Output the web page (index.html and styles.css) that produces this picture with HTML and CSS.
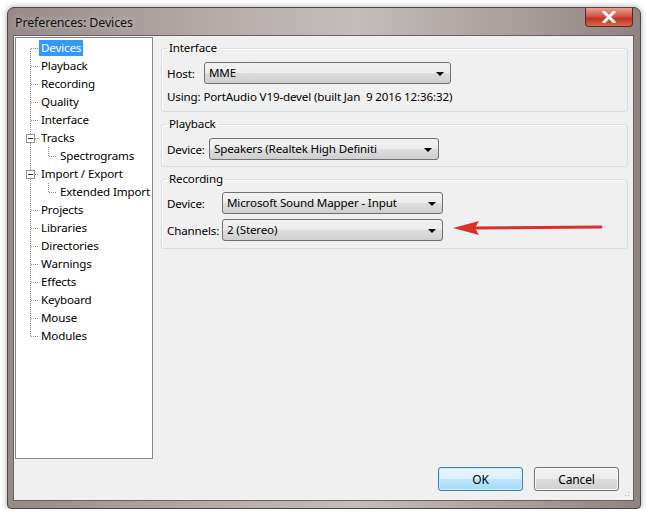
FILE: index.html
```html
<!DOCTYPE html>
<html lang="en">
<head>
    <meta charset="UTF-8">
    <title>Preferences: Devices</title>
    <link rel="stylesheet" href="styles.css">
</head>
<body>
    <div class="window">
        <div class="titlebar">
            <span class="title">Preferences: Devices</span>
            <div class="close">
                <svg width="14" height="12" viewBox="0 0 14 12">
                    <path d="M2 1 L12 11 M12 1 L2 11" stroke="#fff" stroke-width="3" stroke-linecap="square"/>
                </svg>
            </div>
        </div>

        <div class="client">
            <div class="main">
                <div class="tree">
                    <div class="tree-list">
                        <div class="node"><span class="label selected">Devices</span></div>
                        <div class="node"><span class="label">Playback</span></div>
                        <div class="node"><span class="label">Recording</span></div>
                        <div class="node"><span class="label">Quality</span></div>
                        <div class="node"><span class="label">Interface</span></div>
                        <div class="node"><span class="expander"></span><span class="label">Tracks</span></div>
                        <div class="node child"><span class="label">Spectrograms</span></div>
                        <div class="node"><span class="expander"></span><span class="label">Import / Export</span></div>
                        <div class="node child"><span class="label">Extended Import</span></div>
                        <div class="node"><span class="label">Projects</span></div>
                        <div class="node"><span class="label">Libraries</span></div>
                        <div class="node"><span class="label">Directories</span></div>
                        <div class="node"><span class="label">Warnings</span></div>
                        <div class="node"><span class="label">Effects</span></div>
                        <div class="node"><span class="label">Keyboard</span></div>
                        <div class="node"><span class="label">Mouse</span></div>
                        <div class="node"><span class="label">Modules</span></div>
                    </div>
                </div>

                <div class="pane">
                    <fieldset class="group">
                        <legend>Interface</legend>
                        <div class="row">
                            <span class="field-label">Host:</span>
                            <div class="combo combo-host">MME</div>
                        </div>
                        <div class="using">Using: PortAudio V19-devel (built Jan&nbsp; 9 2016 12:36:32)</div>
                    </fieldset>

                    <fieldset class="group">
                        <legend>Playback</legend>
                        <div class="row">
                            <span class="field-label">Device:</span>
                            <div class="combo combo-play">Speakers (Realtek High Definiti</div>
                        </div>
                    </fieldset>

                    <fieldset class="group recording">
                        <legend>Recording</legend>
                        <div class="row">
                            <span class="field-label wide">Device:</span>
                            <div class="combo combo-rec">Microsoft Sound Mapper - Input</div>
                        </div>
                        <div class="row">
                            <span class="field-label wide">Channels:</span>
                            <div class="combo combo-rec">2 (Stereo)</div>
                        </div>
                        <svg class="arrow" width="156" height="20" viewBox="0 0 156 20">
                            <path d="M22 10 L150 9" stroke="#d9302a" stroke-width="3" stroke-linecap="round"/>
                            <path d="M2 10 L28 3 L24 10 L28 17 Z" fill="#d9302a"/>
                        </svg>
                    </fieldset>
                </div>
            </div>

            <div class="buttons">
                <button class="btn default">OK</button>
                <button class="btn">Cancel</button>
            </div>
            <div class="grip"></div>
        </div>
    </div>
</body>
</html>
```

FILE: styles.css
```css
body {
    margin: 0;
    background: #ffffff;
    font-family: "Noto Sans", "Open Sans", sans-serif;
    font-size: 11.6px;
    letter-spacing: -0.15px;
    color: #000;
}
.window {
    margin: 7px 0 0 7px;
    width: 634px;
    height: 502px;
    box-sizing: border-box;
    border: 1px solid #4e4545;
    border-radius: 7px 7px 4px 4px;
    background: linear-gradient(90deg, #968a88 0%, #b7aeac 35%, #c4bdbb 55%, #a99f9d 80%, #8f8382 100%);
    box-shadow: 0 0 6px rgba(0,0,0,0.35);
    display: flex;
    flex-direction: column;
    position: relative;
}
.titlebar {
    height: 27px;
    display: flex;
    align-items: flex-start;
    justify-content: space-between;
}
.title {
    padding: 6px 0 0 7px;
    font-size: 12.5px;
    color: #111;
    text-shadow: 0 0 6px rgba(255,255,255,0.6);
}
.close {
    width: 46px;
    height: 18px;
    margin: 0 7px 0 0;
    border: 1px solid #5c2a24;
    border-top: none;
    border-radius: 0 0 4px 4px;
    background: linear-gradient(180deg, #e8a092 0%, #d0584a 45%, #c2301f 60%, #d86a50 100%);
    display: flex;
    align-items: center;
    justify-content: center;
}
.client {
    flex: 1;
    margin: 0 6px 7px 5px;
    background: #f0f0f0;
    border: 1px solid #6a6060;
    display: flex;
    flex-direction: column;
    position: relative;
}
.main {
    display: flex;
    gap: 8px;
    padding: 1px 0 0 1px;
}
.tree {
    width: 138px;
    height: 422px;
    box-sizing: border-box;
    background: #fff;
    border: 1px solid #828790;
    padding-top: 1px;
}
.tree-list {
    position: relative;
}
.tree-list::before {
    content: "";
    position: absolute;
    left: 14px;
    top: 10px;
    bottom: 9px;
    border-left: 1px dotted #8a8a8a;
}
.node {
    height: 18px;
    line-height: 17px;
    padding-left: 23px;
    position: relative;
    white-space: nowrap;
}
.node::before {
    content: "";
    position: absolute;
    left: 15px;
    top: 9px;
    width: 7px;
    border-top: 1px dotted #8a8a8a;
}
.node.child {
    padding-left: 42px;
}
.node.child::before {
    left: 33px;
}
.node.child::after {
    content: "";
    position: absolute;
    left: 32px;
    top: 0;
    height: 9px;
    border-left: 1px dotted #8a8a8a;
}
.label {
    padding: 0 2px 1px;
}
.label.selected {
    background: #3399ff;
    color: #fff;
}
.expander {
    position: absolute;
    left: 10px;
    top: 5px;
    width: 7px;
    height: 7px;
    border: 1px solid #919191;
    background: #fff;
    z-index: 1;
}
.expander::after {
    content: "";
    position: absolute;
    left: 1px;
    top: 3px;
    width: 5px;
    border-top: 1px solid #333;
}
.pane {
    width: 467px;
    padding-top: 3px;
    display: flex;
    flex-direction: column;
    gap: 4px;
}
.group {
    margin: 0;
    padding: 0 5px 6px 5px;
    border: 1px solid #d5dfe5;
    border-radius: 3px;
    box-shadow: inset 1px 1px 0 #fff;
    position: relative;
}
.group legend {
    padding: 0 2px;
    line-height: 16px;
}
.row {
    display: flex;
    align-items: center;
    margin-top: 6px;
}
.recording {
    padding-bottom: 7px;
}
.recording .row:first-of-type {
    margin-top: 5px;
}
.recording .row + .row {
    margin-top: 5px;
}
.field-label {
    width: 37px;
}
.field-label.wide {
    width: 55px;
}
.combo {
    height: 20px;
    line-height: 20px;
    box-sizing: content-box;
    padding: 0 20px 0 4px;
    border: 1px solid #707070;
    border-radius: 3px;
    background: linear-gradient(180deg, #f3f3f3 0%, #ebebeb 50%, #dddddd 51%, #cfcfcf 100%);
    position: relative;
    white-space: nowrap;
    overflow: hidden;
}
.combo::after {
    content: "";
    position: absolute;
    right: 6px;
    top: 9px;
    border-left: 4px solid transparent;
    border-right: 4px solid transparent;
    border-top: 4px solid #000;
}
.combo-host {
    width: 221px;
}
.combo-play {
    width: 204px;
    margin-left: 5px;
}
.combo-rec {
    width: 195px;
}
.using {
    margin-top: 5px;
    line-height: 16px;
    white-space: nowrap;
}
.arrow {
    position: absolute;
    left: 289px;
    top: 31px;
}
.buttons {
    display: flex;
    justify-content: flex-end;
    gap: 11px;
    padding: 8px 14px 0 0;
}
.btn {
    width: 85px;
    height: 24px;
    font-family: inherit;
    font-size: 12px;
    letter-spacing: -0.15px;
    border: 1px solid #707070;
    border-radius: 3px;
    background: linear-gradient(180deg, #f2f2f2 0%, #ebebeb 50%, #dddddd 51%, #cfcfcf 100%);
    box-shadow: inset 0 0 0 1px #fcfcfc;
    padding: 0;
}
.btn.default {
    border-color: #3c7fb1;
    background: linear-gradient(180deg, #eaf6fd 0%, #d9f0fc 50%, #bee6fd 51%, #a7d9f5 100%);
    box-shadow: inset 0 0 0 1px #c7ecfc;
}
.grip {
    position: absolute;
    right: 2px;
    bottom: 2px;
    width: 10px;
    height: 10px;
    background-image: radial-gradient(circle, #b0b0b0 0.8px, transparent 1px);
    background-size: 3px 3px;
    clip-path: polygon(100% 0, 100% 100%, 0 100%);
}
```
